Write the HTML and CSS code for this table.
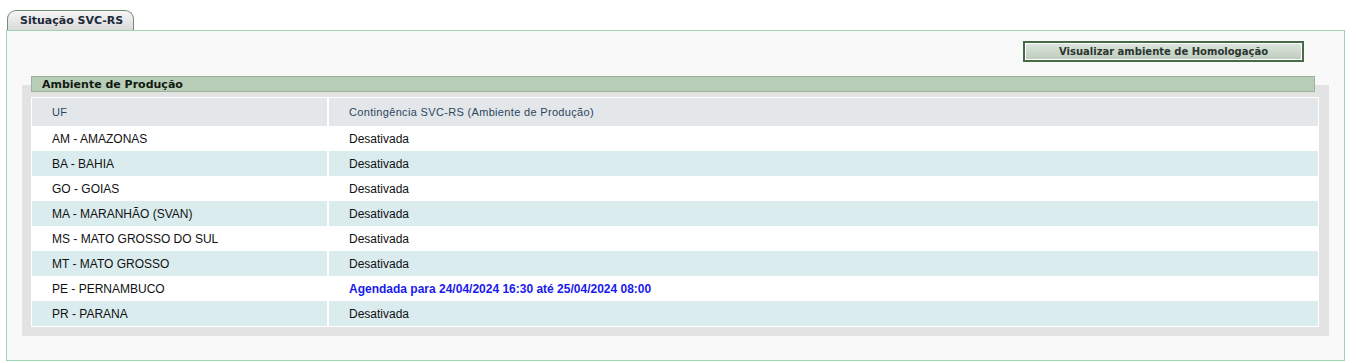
FILE: index.html
```html
<!DOCTYPE html>
<html lang="pt-BR">
<head>
<meta charset="utf-8">
<title>Situação SVC-RS</title>
<link rel="stylesheet" href="styles.css">
</head>
<body>
<div class="page">
  <div class="tabs">
    <div class="tab">Situação SVC-RS</div>
  </div>
  <div class="panel">
    <div class="actions">
      <button class="btn" type="button">Visualizar ambiente de Homologação</button>
    </div>
    <div class="box">
      <div class="box-title">Ambiente de Produção</div>
      <table class="grid">
        <thead>
          <tr><th class="c1">UF</th><th>Contingência SVC-RS (Ambiente de Produção)</th></tr>
        </thead>
        <tbody>
          <tr><td class="c1">AM - AMAZONAS</td><td>Desativada</td></tr>
          <tr class="alt"><td class="c1">BA - BAHIA</td><td>Desativada</td></tr>
          <tr><td class="c1">GO - GOIAS</td><td>Desativada</td></tr>
          <tr class="alt"><td class="c1">MA - MARANHÃO (SVAN)</td><td>Desativada</td></tr>
          <tr><td class="c1">MS - MATO GROSSO DO SUL</td><td>Desativada</td></tr>
          <tr class="alt"><td class="c1">MT - MATO GROSSO</td><td>Desativada</td></tr>
          <tr><td class="c1">PE - PERNAMBUCO</td><td><span class="sched">Agendada para 24/04/2024 16:30 até 25/04/2024 08:00</span></td></tr>
          <tr class="alt"><td class="c1">PR - PARANA</td><td>Desativada</td></tr>
        </tbody>
      </table>
    </div>
  </div>
</div>
</body>
</html>
```

FILE: styles.css
```css
html, body {
  margin: 0;
  padding: 0;
  background: #ffffff;
}

.page {
  padding: 10px 11px 2px 6px;
  font-family: "Liberation Sans", Arial, sans-serif;
}

.tabs {
  display: flex;
  padding-left: 1px;
}

.tab {
  height: 19px;
  line-height: 20px;
  padding: 0 12px 0 12px;
  width: 101px;
  border: 1px solid #6f8f6f;
  border-bottom: none;
  border-radius: 9px 9px 0 0;
  background: linear-gradient(#f6f6f6, #d9d9d9);
  font-family: "DejaVu Sans", Verdana, sans-serif;
  font-weight: bold;
  font-size: 11px;
  color: #1c2a3a;
  white-space: nowrap;
}

.panel {
  border: 1px solid #9fd4b3;
  background: #f9f9f9;
  padding: 10px 15px 24px 15px;
}

.actions {
  display: flex;
  justify-content: flex-end;
  padding-right: 25px;
}

.btn {
  width: 281px;
  height: 21px;
  margin: 0;
  padding: 0;
  border: 2px solid #466c46;
  box-shadow: inset 0 0 0 1px #ffffff;
  background: linear-gradient(#dee6de, #bccbbc);
  font-family: "DejaVu Sans", Verdana, sans-serif;
  font-weight: bold;
  font-size: 10px;
  color: #2b3530;
  cursor: pointer;
}

.box {
  margin-top: 23px;
  background: #e3e3e3;
  padding: 0 10px 9px 9px;
}

.box-title {
  position: relative;
  top: -9px;
  margin-right: 4px;
  margin-bottom: -9px;
  height: 14px;
  line-height: 15px;
  border: 1px solid #9ab49a;
  background: #b9ceb9;
  padding-left: 10px;
  font-family: "DejaVu Sans", Verdana, sans-serif;
  font-weight: bold;
  font-size: 11px;
  color: #111a11;
}

.grid {
  margin-top: 5px;
  width: 100%;
  border-collapse: collapse;
  border: 1px solid #ffffff;
  font-size: 12px;
}

.grid th {
  height: 28px;
  padding: 0 0 0 20px;
  background: #e3e7ea;
  text-align: left;
  font-weight: normal;
  font-size: 11px;
  letter-spacing: 0.33px;
  color: #2b4560;
}

.grid td {
  height: 25px;
  padding: 0 0 0 20px;
  background: #ffffff;
  color: #111111;
}

.grid tr.alt td {
  background: #dbecef;
}

.grid .c1 {
  width: 275px;
  border-right: 2px solid #ffffff;
}

.sched {
  color: #1a1aee;
  font-weight: bold;
}
```
